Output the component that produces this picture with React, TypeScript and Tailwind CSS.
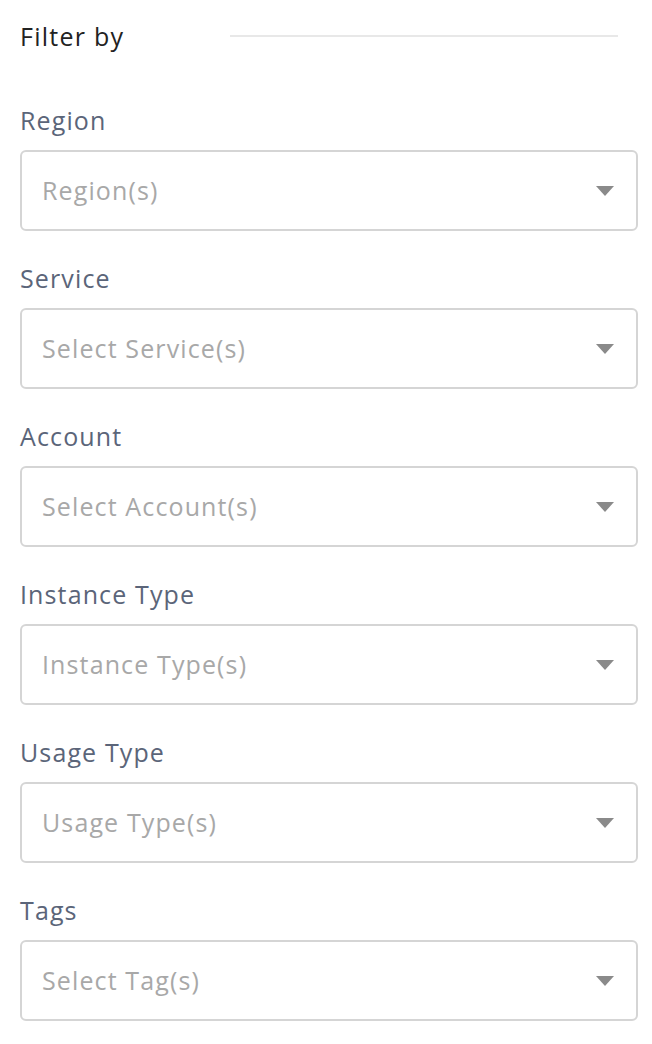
const filters = [
  { label: "Region", placeholder: "Region(s)" },
  { label: "Service", placeholder: "Select Service(s)" },
  { label: "Account", placeholder: "Select Account(s)" },
  { label: "Instance Type", placeholder: "Instance Type(s)" },
  { label: "Usage Type", placeholder: "Usage Type(s)" },
  { label: "Tags", placeholder: "Select Tag(s)" },
];

function Caret() {
  return (
    <svg width="18" height="10" viewBox="0 0 18 10" className="shrink-0">
      <path d="M0 0 H18 L9 10 Z" fill="#8a8a8a" />
    </svg>
  );
}

function FilterSelect({ label, placeholder }: { label: string; placeholder: string }) {
  return (
    <div className="mt-[32px] first:mt-0">
      <div className="text-[25px] leading-[30px] tracking-[0.045em] text-[#5b6579]">{label}</div>
      <button
        type="button"
        className="mt-[15px] flex h-[81px] w-full items-center justify-between rounded-[6px] border-2 border-[#d5d5d5] bg-white pl-[20px] pr-[22px] text-left"
      >
        <span className="text-[25px] tracking-[0.045em] text-[#a8a8a8]">{placeholder}</span>
        <Caret />
      </button>
    </div>
  );
}

export default function App() {
  return (
    <div
      className="min-h-screen bg-white pl-[20px] pr-[14px] pt-[20px]"
      style={{ fontFamily: "'Open Sans', Lato, sans-serif" }}
    >
      <div className="flex items-center">
        <span className="w-[210px] shrink-0 text-[25px] leading-[32px] tracking-[0.05em] text-[#222]">
          Filter by
        </span>
        <div className="mr-[20px] h-[2px] flex-1 bg-[#e8e8e8]" />
      </div>
      <div className="mt-[53px]">
        {filters.map((f) => (
          <FilterSelect key={f.label} label={f.label} placeholder={f.placeholder} />
        ))}
      </div>
    </div>
  );
}
